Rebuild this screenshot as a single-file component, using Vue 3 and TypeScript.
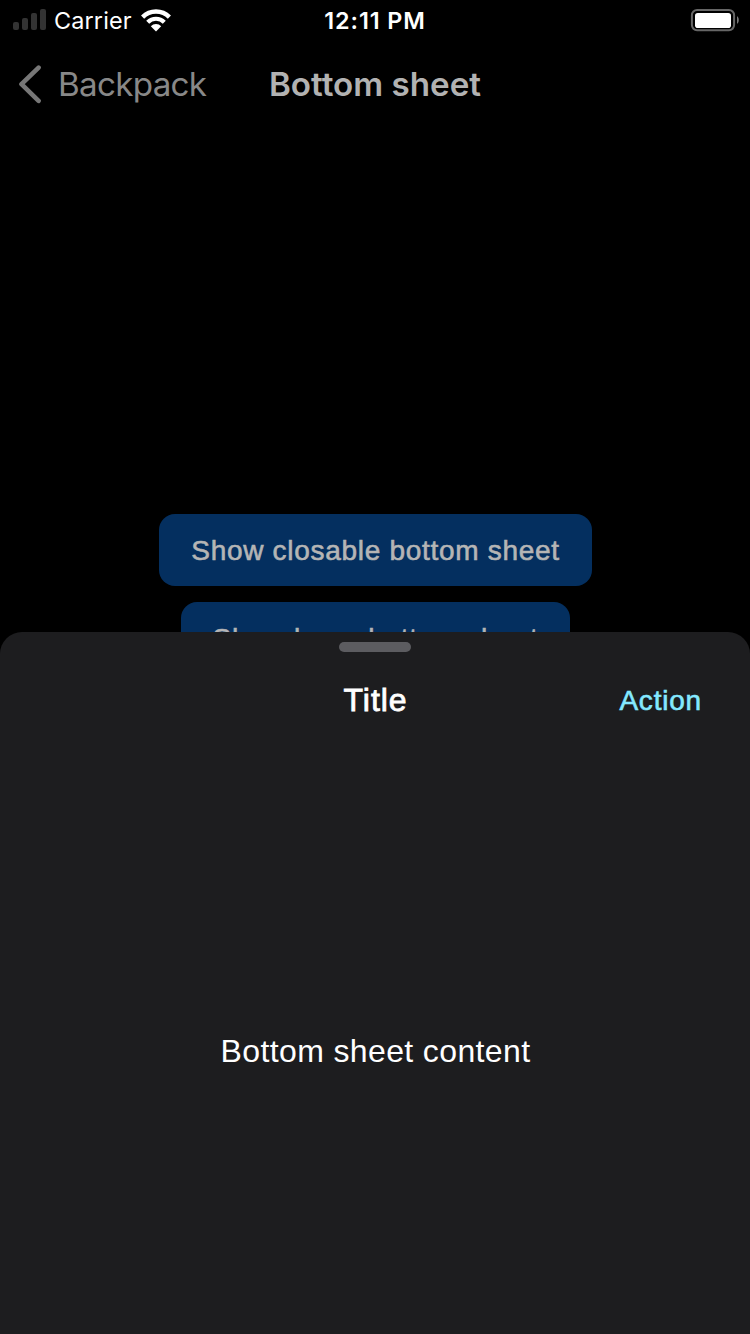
<script setup lang="ts">
const actions: string[] = ['Show closable bottom sheet', 'Show large bottom sheet']
</script>

<template>
  <div class="screen">
    <header class="status">
      <div class="network">
        <svg class="signal" width="34" height="22" viewBox="0 0 34 22" fill="#333">
          <rect x="0" y="13" width="6" height="8" rx="2" />
          <rect x="9" y="9" width="6" height="12" rx="2" />
          <rect x="18" y="4" width="6" height="17" rx="2" />
          <rect x="27" y="0" width="6" height="21" rx="2" />
        </svg>
        <span class="carrier">Carrier</span>
        <svg class="wifi" width="30" height="23" viewBox="0 0 30 23" fill="none" stroke="#fff">
          <path d="M1.600 8.100a18.900 18.900 0 0 1 26.800 0" stroke-width="4.400" />
          <path d="M6.700 13.200a11.700 11.700 0 0 1 16.600 0" stroke-width="4.200" />
          <path d="M9.800 17.300a7 7 0 0 1 10.400 0L15 22.400z" fill="#fff" stroke="none" />
        </svg>
      </div>
      <span class="clock">12:11 PM</span>
      <svg class="battery" width="50" height="24" viewBox="0 0 50 24">
        <rect x="1.900" y="1.900" width="42.200" height="20.400" rx="5.200" fill="none" stroke="#666" stroke-width="2" />
        <rect x="5" y="5" width="36" height="15" rx="2.800" fill="#fff" />
        <path d="M47 8.200c2.400 1.200 2.400 6.400 0 7.600z" fill="#777" />
      </svg>
    </header>

    <nav class="nav">
      <div class="back">
        <svg width="24" height="40" viewBox="0 0 24 40" fill="none" stroke="#777" stroke-width="4.600" stroke-linecap="round" stroke-linejoin="round">
          <path d="M20.600 3.600L3.500 20.200l17.100 16.600" />
        </svg>
        <span class="back-label">Backpack</span>
      </div>
      <h1 class="heading">Bottom sheet</h1>
    </nav>

    <main class="actions">
      <button v-for="label in actions" :key="label" class="button">{{ label }}</button>
    </main>

    <section class="sheet">
      <div class="handle"></div>
      <div class="sheet-header">
        <h2 class="title">Title</h2>
        <span class="action">Action</span>
      </div>
      <div class="content"><p>Bottom sheet content</p></div>
    </section>
  </div>
</template>

<style>
body {
  background: #000;
}
</style>

<style scoped>
.screen {
  position: relative;
  width: 750px;
  height: 1334px;
  overflow: hidden;
  background: #000;
  color: #fff;
  font-family: "Liberation Sans", Arial, sans-serif;
}
.status {
  display: grid;
  grid-template-columns: 1fr auto 1fr;
  align-items: center;
  height: 40px;
  font-family: Inter, sans-serif;
  font-size: 23.4px;
}
.network {
  display: flex;
  align-items: center;
  padding-left: 13px;
}
.carrier {
  margin-left: 7px;
  width: 87px;
  letter-spacing: 0.15px;
}
.clock {
  font-weight: 600;
  letter-spacing: 0.9px;
}
.battery {
  justify-self: end;
  margin-right: 10px;
}
.nav {
  display: grid;
  grid-template-columns: 1fr auto 1fr;
  align-items: center;
  height: 88px;
  font-family: Inter, sans-serif;
  font-size: 33.2px;
}
.back {
  display: flex;
  align-items: center;
  padding-left: 18px;
  color: #888;
}
.back-label {
  margin-left: 16px;
  letter-spacing: -0.7px;
}
.heading {
  margin: 0;
  font-size: 33.2px;
  font-weight: 600;
  color: #b2b2b2;
}
.actions {
  display: flex;
  flex-direction: column;
  align-items: center;
  gap: 16px;
  padding: 386px 0 0 1px;
}
.button {
  height: 72px;
  padding: 2px 32px 0;
  border: 0;
  border-radius: 16px;
  background: #042f5f;
  color: #b5b5b5;
  font: 28px/70px "Liberation Sans", Arial, sans-serif;
  letter-spacing: 0.7px;
  -webkit-text-stroke: 0.6px #b5b5b5;
  white-space: nowrap;
}
.sheet {
  position: absolute;
  inset: 632px 0 0;
  display: flex;
  flex-direction: column;
  border-radius: 22px 22px 0 0;
  background: #1d1d1f;
}
.handle {
  width: 72px;
  height: 10px;
  margin: 10px auto 0;
  border-radius: 5px;
  background: #5c5c60;
}
.sheet-header {
  display: grid;
  grid-template-columns: 1fr auto 1fr;
  align-items: center;
  height: 96px;
  padding: 0 48px 0 49px;
}
.title {
  grid-column: 2;
  margin: 0;
  font-size: 32px;
  font-weight: 400;
  letter-spacing: 0.9px;
  -webkit-text-stroke: 0.8px #fff;
}
.action {
  justify-self: end;
  padding-top: 2px;
  font-size: 28px;
  letter-spacing: 0.8px;
  color: #84e9ff;
  -webkit-text-stroke: 0.6px #84e9ff;
}
.content {
  flex: 1;
  text-align: center;
  padding: 284px 0 0 1px;
}
.content p {
  margin: 0;
  font-size: 32px;
  letter-spacing: 0.37px;
  line-height: 38px;
}
</style>
